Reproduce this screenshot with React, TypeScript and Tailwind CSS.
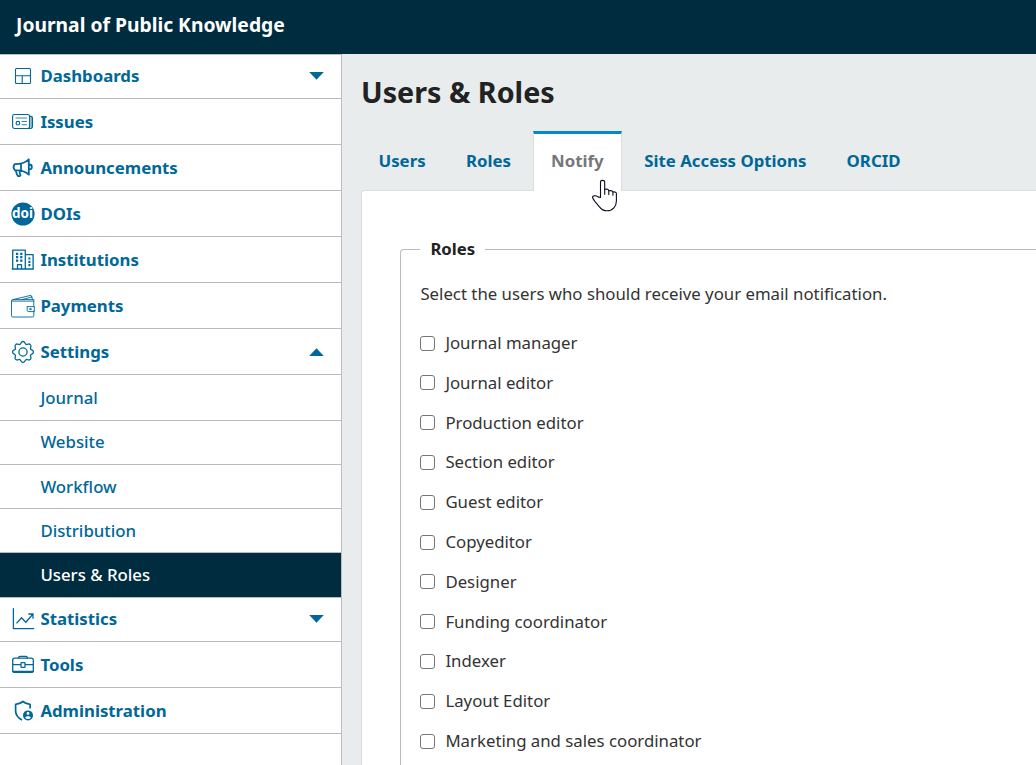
import type { ReactNode } from "react";

function Icon({ children, width = 1.3 }: { children: ReactNode; width?: number }) {
  return (
    <svg viewBox="0 0 24 24" className="size-6 shrink-0" fill="none" stroke="currentColor" strokeWidth={width} strokeLinecap="round" strokeLinejoin="round">
      {children}
    </svg>
  );
}

const icons = {
  dashboards: (
    <Icon width={1.1}>
      <rect x="4.5" y="4.5" width="15" height="15" rx="1" />
      <path d="M4.5 11.8h15M11.2 12v7.5" />
    </Icon>
  ),
  issues: (
    <Icon width={1.1}>
      <rect x="1.6" y="4.5" width="17" height="14" rx="2" />
      <path d="M18.6 6.4h1.2q1.7 0 1.7 1.7v7.9q0 2.5-2 2.5H17" />
      <path d="M20.2 7.6v9.6" strokeOpacity=".5" strokeWidth="1.6" />
      <path d="M5 8h10.5M11 11.5h4.5M11 14.7h4.5" strokeOpacity=".8" />
      <circle cx="6.9" cy="13.2" r="1.8" />
    </Icon>
  ),
  announcements: (
    <Icon width={1.8}>
      <path d="M3.5 8.2C8 8.3 13.5 7.5 17.8 3.3V18.7C14 15.1 9 14.1 4.3 14.5 2.4 12.7 2.2 10.3 3.5 8.2ZM10 7.8v6.4M5 14.5c.2 2.5.7 4 1.7 5.3.8.7 2.9.2 2.8-.8-1-1.4-1.1-2.8-.6-4.5M18.3 8.5c3.4 0 3.4 4.8 0 4.8" />
    </Icon>
  ),
  dois: (
    <Icon>
      <circle cx="12" cy="12" r="11.6" fill="currentColor" stroke="none" />
      <text x="1" y="16.2" textLength="21" lengthAdjust="spacingAndGlyphs" fill="#fff" stroke="none" className="font-['Noto_Sans'] text-[13.5px] font-bold">doi</text>
    </Icon>
  ),
  institutions: (
    <Icon width={1.3}>
      <path d="M1.7 21V2.2h12.6V21M14.3 6.7h7.8V21M1.2 21h21.2M6.5 20.8v-4.1h4v4.1" />
      <path d="M5 5.9h2.2M9.2 5.9h2.2M5 9.2h2.2M9.2 9.2h2.2M5 12.7h2.2M9.2 12.7h2.2M17.4 10.5h2M17.4 13.8h2M17.4 17.1h2" strokeWidth="2.2" strokeLinecap="butt" />
    </Icon>
  ),
  payments: (
    <Icon width={0.9}>
      <path d="M22.8 16.8v5q0 1.2-1.2 1.2H1.7q-1.2 0-1.2-1.2V7.1q0-1.4 1.5-1.5h20.8v7M.5 7.1h22.3M2 5.6 20 1.3l1.7 4.3M11 5.6 21 3M16.5 12.6h6.8v5h-5.5q-1.6 0-1.6-1.3v-3.7z" />
      <circle cx="19.3" cy="15.1" r=".8" />
    </Icon>
  ),
  settings: (
    <Icon width={1.3}>
      <path d="M12 1.5C14.2 1.5 13.9 3.9 15.1 4.4C16.4 5 17.9 3 19.4 4.6C21 6.1 19 7.6 19.6 8.9C20.1 10.1 22.5 9.8 22.5 12C22.5 14.2 20.1 13.9 19.6 15.1C19 16.4 21 17.9 19.4 19.4C17.9 21 16.4 19 15.1 19.6C13.9 20.1 14.2 22.5 12 22.5C9.8 22.5 10.1 20.1 8.9 19.6C7.6 19 6.1 21 4.6 19.4C3 17.9 5 16.4 4.4 15.1C3.9 13.9 1.5 14.2 1.5 12C1.5 9.8 3.9 10.1 4.4 8.9C5 7.6 3 6.1 4.6 4.6C6.1 3 7.6 5 8.9 4.4C10.1 3.9 9.8 1.5 12 1.5Z" />
      <circle cx="12" cy="12" r="4.1" />
    </Icon>
  ),
  statistics: (
    <Icon width={1.3}>
      <path d="M2.4 1.6v20h20.3" />
      <path d="M5.5 16.4 10.5 10.7l4.3 4.5 7-8M17.3 7h4.7v4.7" strokeLinecap="butt" strokeLinejoin="miter" />
    </Icon>
  ),
  tools: (
    <Icon width={1.3}>
      <rect x="1.7" y="5.2" width="20.6" height="14.2" rx="2" />
      <path d="M7.7 5V4.5q0-1.2 1.4-1.2h5.8q1.4 0 1.4 1.2V5M2 11.6h7.5M14.5 11.6H22M1.9 18.3h20.2" />
      <rect x="10" y="9.6" width="4" height="4.8" rx=".7" />
    </Icon>
  ),
  administration: (
    <Icon width={1.7}>
      <path d="M11 20.9C6.8 18.7 4.6 16.2 4.6 11.7V5.4q4.4-.4 7.3-2.9 2.9 2.4 7.2 2.9V9.5" strokeLinecap="butt" />
      <circle cx="17" cy="16.4" r="5" fill="currentColor" stroke="none" />
      <circle cx="17" cy="14.4" r="1.4" fill="#fff" stroke="none" />
      <path d="M14.2 18.4c1-1.7 4.6-1.7 5.6 0-1 2-4.6 2-5.6 0Z" fill="#fff" stroke="none" />
    </Icon>
  ),
};

function Caret({ up }: { up?: boolean }) {
  return (
    <svg viewBox="0 0 16 8" className="mr-4 ml-auto h-2 w-4 fill-[#006798]">
      {up ? <path d="M.2 8 7.5.3 14.8 8z" /> : <path d="M.2 0h14.6L7.5 7.7z" />}
    </svg>
  );
}

function Item({ icon, label, caret, className = "h-[46px] pt-px" }: { icon: ReactNode; label: string; caret?: "up" | "down"; className?: string }) {
  return (
    <a className={`flex items-center border-b border-[#bbb] pl-[11px] text-[16.8px] font-bold text-[#006798] ${className}`}>
      {icon}
      <span className="ml-[5.4px]">{label}</span>
      {caret && <Caret up={caret === "up"} />}
    </a>
  );
}

function SubItem({ label, className }: { label: string; className: string }) {
  return <a className={`flex items-center border-b border-[#bbb] pl-[40.4px] text-[16.8px] font-medium ${className}`}>{label}</a>;
}

const roles = [
  "Journal manager", "Journal editor", "Production editor", "Section editor", "Guest editor", "Copyeditor",
  "Designer", "Funding coordinator", "Indexer", "Layout Editor", "Marketing and sales coordinator",
];

function HandCursor() {
  return (
    <svg viewBox="0 0 28 34" className="absolute top-[44px] left-[56px] h-[34px] w-7" fill="#fff" stroke="#0b0b20" strokeWidth="1.1" strokeLinejoin="round" strokeLinecap="round">
      <path d="M10.5 19.5V4.3q0-1.9 2.2-1.9 2 0 2 1.9v7q3.7-.7 4.1 1.5 3.7-.6 4.1 1.2 3.5-.5 3.5 1.6v7.5q0 4-2.5 6.8-2.4 2.9-6.9 2.9-4.6 0-7.3-3.7L5 23.6q-1.5-2-2.3-3.5-.6-2 1.3-2.2 2.3-.5 4 1z" />
      <path d="M14.7 11.3v5M18.8 12.8v3.8M22.9 14v3.2" />
    </svg>
  );
}

export default function App() {
  return (
    <div className="flex h-[765px] w-[1036px] flex-col overflow-hidden bg-[#e8ecec] font-['Noto_Sans',sans-serif]">
      <header className="flex h-[54px] shrink-0 items-center bg-[#002c40] pb-1 pl-4 text-[19.3px] font-bold text-white">Journal of Public Knowledge</header>
      <div className="flex min-h-0 flex-1">
        <nav className="w-[342px] shrink-0 border-t border-r border-[#bbb] bg-white">
          <Item icon={icons.dashboards} label="Dashboards" caret="down" className="h-11 pb-px" />
          <Item icon={icons.issues} label="Issues" />
          <Item icon={icons.announcements} label="Announcements" />
          <Item icon={icons.dois} label="DOIs" />
          <Item icon={icons.institutions} label="Institutions" />
          <Item icon={icons.payments} label="Payments" />
          <Item icon={icons.settings} label="Settings" caret="up" />
          <SubItem label="Journal" className="h-[46px] pt-px text-[#006798]" />
          <SubItem label="Website" className="h-11 pb-px text-[#006798]" />
          <SubItem label="Workflow" className="h-11 pt-px text-[#006798]" />
          <SubItem label="Distribution" className="h-11 pt-px text-[#006798]" />
          <SubItem label="Users & Roles" className="h-[45px] bg-[#002c40] text-white" />
          <Item icon={icons.statistics} label="Statistics" caret="down" className="h-11 pb-px" />
          <Item icon={icons.tools} label="Tools" />
          <Item icon={icons.administration} label="Administration" />
        </nav>
        <main className="flex min-w-0 flex-1 flex-col pl-[19px]">
          <h1 className="h-[77px] shrink-0 pt-[18px] text-[28.7px] leading-10 font-bold text-[#222]">Users &amp; Roles</h1>
          <div className="relative z-10 flex h-[60px] shrink-0 text-[16.8px] leading-[60px] font-bold text-[#006798]">
            <span className="w-[105px] pl-[17.5px]">Users</span>
            <span className="w-[67px]">Roles</span>
            <span className="relative h-[60px] w-[89px] border-x border-t-3 border-x-[#ddd] border-t-[#008acb] bg-white pl-[17px] leading-[54px] text-[#777]">
              Notify
              <HandCursor />
            </span>
            <span className="w-[224.6px] pl-[22.3px]">Site Access Options</span>
            <span>ORCID</span>
          </div>
          <section className="-mt-px min-h-0 flex-1 rounded-tl-sm border-t border-l border-[#ddd] bg-white pt-[46px] pl-[38px] text-[#333]">
            <fieldset className="h-[600px] rounded-tl-sm border-t border-l border-[#bbb] pl-[19.4px]">
              <legend className="px-2.5 text-[16.7px] leading-6 font-bold text-[#222]">Roles</legend>
              <p className="mt-[21px] text-[16.8px] leading-6">Select the users who should receive your email notification.</p>
              <div className="mt-[17px] flex flex-col">
                {roles.map((role) => (
                  <label key={role} className="flex h-[39.8px] items-center text-[16.8px]">
                    <span className="mt-[0.6px] mr-2.5 size-[15px] rounded-[3px] border border-[#767676] bg-white" />
                    <span className="-mt-[0.5px]">{role}</span>
                  </label>
                ))}
              </div>
            </fieldset>
          </section>
        </main>
      </div>
    </div>
  );
}
